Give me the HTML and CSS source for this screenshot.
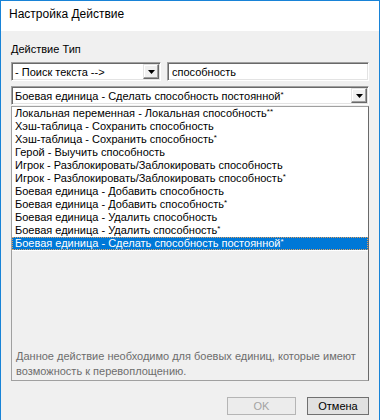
FILE: index.html
```html
<!DOCTYPE html>
<html lang="ru">
<head>
    <meta charset="UTF-8">
    <title>Настройка Действие</title>
    <link rel="stylesheet" href="styles.css">
</head>
<body>
    <div class="dialog">
        <div class="titlebar">Настройка Действие</div>

        <div class="content">
            <div class="field-label">Действие Тип</div>

            <div class="search-row">
                <div class="combo combo-search">
                    <span class="combo-text">- Поиск текста --&gt;</span>
                    <span class="drop-btn">
                        <svg width="7" height="4" viewBox="0 0 7 4"><path d="M0 0H7L3.5 4Z" fill="#000"/></svg>
                    </span>
                </div>
                <div class="text-field">способность</div>
            </div>

            <div class="combo combo-action">
                <span class="combo-text">Боевая единица - Сделать способность постоянной<span class="ast">*</span></span>
                <span class="drop-btn">
                    <svg width="7" height="4" viewBox="0 0 7 4"><path d="M0 0H7L3.5 4Z" fill="#000"/></svg>
                </span>
            </div>

            <div class="action-panel">
                <ul class="action-list">
                    <li>Локальная переменная - Локальная способность<span class="ast">**</span></li>
                    <li>Хэш-таблица - Сохранить способность</li>
                    <li>Хэш-таблица - Сохранить способность<span class="ast">*</span></li>
                    <li>Герой - Выучить способность</li>
                    <li>Игрок - Разблокировать/Заблокировать способность</li>
                    <li>Игрок - Разблокировать/Заблокировать способность<span class="ast">*</span></li>
                    <li>Боевая единица - Добавить способность</li>
                    <li>Боевая единица - Добавить способность<span class="ast">*</span></li>
                    <li>Боевая единица - Удалить способность</li>
                    <li>Боевая единица - Удалить способность<span class="ast">*</span></li>
                    <li class="selected">Боевая единица - Сделать способность постоянной<span class="ast">*</span></li>
                </ul>
                <div class="description">
                    Данное действие необходимо для боевых единиц, которые имеют возможность к перевоплощению.
                </div>
            </div>

            <div class="dialog-buttons">
                <button class="btn btn-ok" disabled>OK</button>
                <button class="btn btn-cancel">Отмена</button>
            </div>
        </div>
    </div>
</body>
</html>
```

FILE: styles.css
```css
:root {
    --window-border: #1883d7;
    --face: #f0f0f0;
    --select: #0078d7;
}

* {
    box-sizing: border-box;
    margin: 0;
    padding: 0;
}

body {
    font-family: 'Liberation Sans', Arial, sans-serif;
    font-size: 11px;
    color: #000;
    background-color: var(--face);
}

.dialog {
    width: 380px;
    height: 420px;
    border: 1px solid var(--window-border);
    border-bottom: none;
    background-color: var(--face);
    overflow: hidden;
}

.titlebar {
    height: 30px;
    line-height: 26px;
    padding-left: 8px;
    font-size: 12px;
    background-color: #fff;
}

.content {
    padding: 11px 10px 0;
}

.field-label {
    line-height: 14px;
    height: 14px;
}

.search-row {
    display: flex;
    gap: 6px;
    margin-top: 6px;
}

/* sunken 3d boxes */
.combo,
.text-field {
    height: 19px;
    background-color: #fff;
    border: 1px solid;
    border-color: #a0a0a0 #fff #fff #a0a0a0;
    box-shadow: inset 1px 1px 0 #696969, inset -1px -1px 0 #e3e3e3;
    display: flex;
    align-items: center;
}

.combo-search {
    width: 150px;
}

.text-field {
    flex: 1;
    padding-left: 4px;
}

.combo-action {
    margin-top: 5px;
}

.combo-text {
    flex: 1;
    padding-left: 3px;
    white-space: nowrap;
    overflow: hidden;
}

.ast {
    font-size: 8px;
    vertical-align: 3px;
    line-height: 0;
}

.drop-btn {
    width: 16px;
    height: 15px;
    margin-right: 1px;
    background-color: var(--face);
    border: 1px solid;
    border-color: #e3e3e3 #696969 #696969 #e3e3e3;
    box-shadow: inset -1px -1px 0 #a0a0a0, inset 1px 1px 0 #fff;
    display: flex;
    align-items: center;
    justify-content: center;
}

.action-panel {
    margin-top: 1px;
    height: 275px;
    border: 1px solid;
    border-color: #a0a0a0 #696969 #a0a0a0 #a0a0a0;
    display: flex;
    flex-direction: column;
}

.action-list {
    list-style: none;
    background-color: #fff;
    padding-bottom: 1px;
}

.action-list li {
    height: 13px;
    line-height: 13px;
    padding-left: 3px;
    white-space: nowrap;
}

.action-list li.selected {
    background-color: var(--select);
    color: #fff;
    outline: 1px dotted #e0a060;
    outline-offset: -1px;
}

.description {
    margin-top: auto;
    padding: 0 4px 1px;
    line-height: 15px;
    color: #6d6d6d;
}

.dialog-buttons {
    display: flex;
    justify-content: flex-end;
    gap: 11px;
    margin-top: 16px;
}

.btn {
    height: 18px;
    font-family: 'Liberation Sans', Arial, sans-serif;
    font-size: 11px;
    background-color: #e1e1e1;
    border: 1px solid #707070;
}

.btn-ok {
    width: 69px;
    color: #a3a3a3;
    background-color: #ececec;
    border-color: #b5b5b5;
}

.btn-cancel {
    width: 62px;
    color: #000;
}
```
